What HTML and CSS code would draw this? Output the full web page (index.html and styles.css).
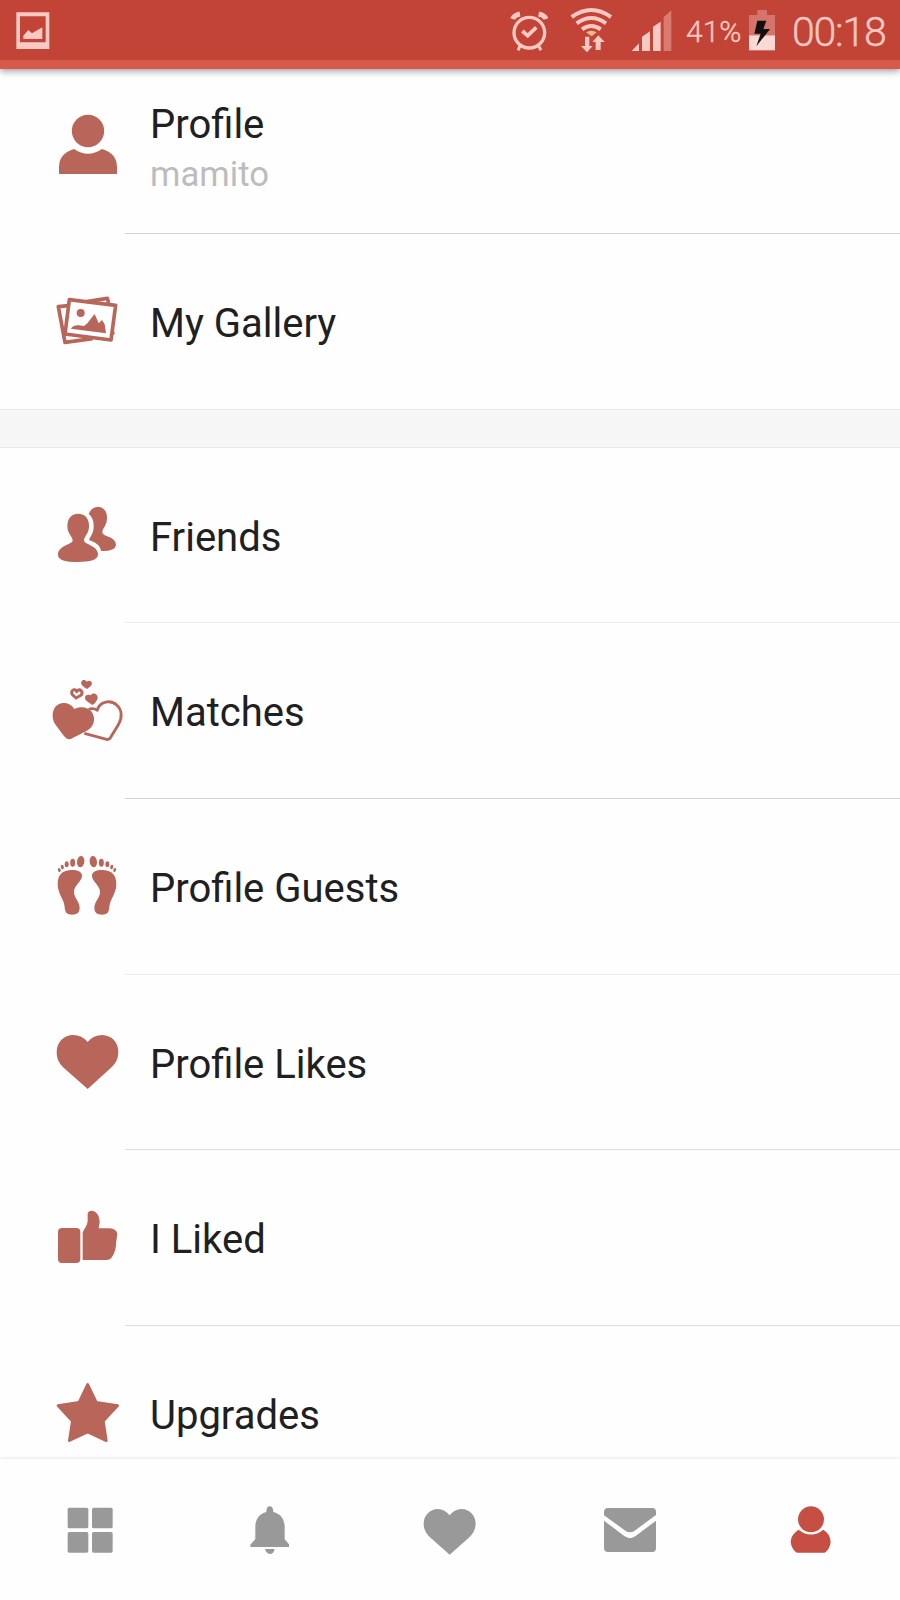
FILE: index.html
```
<!DOCTYPE html>
<html lang="en">
<head>
<meta charset="utf-8">
<title>Profile</title>
<link rel="stylesheet" href="styles.css">
</head>
<body>
<div class="screen">
  <header class="status">
    <svg class="shot" width="34" height="60" viewBox="47 0 102 180"><path fill-rule="evenodd" d="M48 37H147V147H48ZM59 49V127H136V49Z"/><path d="M69 117V107L84 90L95 100L126 82V117Z"/></svg>
    <svg class="alarm" width="40" height="60" viewBox="60 0 120 180"><g fill="none" stroke="#fbc9c3"><circle cx="118" cy="98" r="46" stroke-width="10"/><path d="M97 93L113 107L139 82" stroke-width="11"/><path d="M68 57Q72 46 90 42M146 42Q164 46 168 57" stroke-width="15"/><path d="M90 138L84 151M146 138L153 151" stroke-width="9"/></g></svg>
    <svg class="wifi" width="42" height="60" viewBox="240 0 126 180"><g fill="none" stroke="#fbc9c3" stroke-width="12"><path d="M245 51Q304 9 363 51M260 70Q304 38 348 70M276 88Q304 68 332 88"/></g><path fill="#f9b98c" d="M288 97Q304 87 320 97L305 109Z"/><path d="M285 110H298V138H308L291 157L273 138H285ZM325 106L344 126H332V150H317V126H307Z"/></svg>
    <svg class="signal" width="41" height="60" viewBox="423 0 123 180"><path d="M425 153L447 130V153ZM456 153V110L480 94V153ZM489 153V80L512 65V153Z"/><path fill="#d97b71" d="M521 153V52L544 31V153Z"/></svg>
    <span class="percent">41%</span>
    <svg class="battery" width="26" height="60" viewBox="777 0 78 180"><path fill="#d6736a" d="M802 30H831V45H855V106H777V45H802Z"/><path fill="#fbd9d5" d="M777 106H855V151H777Z"/><path fill="#111" d="M802 62H829L820 87H840L799 139L812 101H793Z"/></svg>
    <span class="clock">00:18</span>
  </header>

  <main class="list">
    <a class="row profile">
      <svg class="icon" viewBox="144 315 240 240"><circle cx="264" cy="393" r="48.500"/><path d="M177 522V500Q178 460 222 447Q264 476 306 447Q350 460 351 500V522Z"/></svg>
      <span class="text"><span class="label">Profile</span><span class="sub">mamito</span></span>
    </a>
    <a class="row">
      <svg class="icon" viewBox="24 3 240 240"><g fill="none" stroke="#b9665a" stroke-width="11" stroke-linejoin="round"><path d="M88 59L227 76L213 180L75 162Z"/><path d="M85 77L55 80L75 187L158 176M140 65L202 55L206 69"/></g><path d="M218 146L225 160L217 168Z"/><circle cx="122" cy="99" r="12"/><path d="M92 146Q101 134 117 136L132 138Q144 130 150 119L164 102L176 130L186 120L194 133L198 160Z"/></svg>
      <span class="label">My Gallery</span>
    </a>
    <div class="gap"></div>
    <a class="row light">
      <svg class="icon" viewBox="24 15 240 240"><path d="M114 71C136 71 148 87 147 109C147 130 134 139 132 150C130 164 174 165 174 193C174 210 151 216 114 216C77 216 54 211 54 194C54 166 99 164 98 151C97 140 82 130 82 108C82 86 94 71 114 71Z"/><path d="M146 71Q155 51 173 50C192 51 202 65 201 86C200 107 187 115 187 126C187 141 228 138 228 165Q226 184 183 183C181 166 166 157 148 151C145 144 162 134 161 107Q161 84 146 71Z"/></svg>
      <span class="label">Friends</span>
    </a>
    <a class="row">
      <svg class="icon" viewBox="24 15 240 240"><path d="M87 223Q80 223 70 211L49 182C38 170 35 150 41 135C50 110 87 106 103 132C122 122 144 126 155 140C168 160 162 180 149 191C138 200 118 208 102 217Q94 223 87 223Z"/><path fill="none" stroke="#b9665a" stroke-width="8.500" stroke-linejoin="round" d="M146 133Q160 128 172 136C178 107 213 104 230 120C246 134 248 157 235 179L212 217Q208 225 200 223L133 205"/><path d="M141 72Q132 68 125 59C119 47 134 40 140 50C151 42 161 54 153 62ZM157 120L141 109C128 99 138 85 152 91C158 80 174 86 173 99Q170 113 157 120Z"/><path fill="none" stroke="#b9665a" stroke-width="9" d="M108 99L97 89C91 77 103 68 110 79C120 69 130 80 124 90Z"/></svg>
      <span class="label">Matches</span>
    </a>
    <a class="row light">
      <svg class="icon" viewBox="24 18 240 240"><g id="foot"><path d="M92 90C114 88 127 96 126 109C125 125 101 137 102 157C103 176 119 184 119 205C118 219 111 224 96 224C79 224 75 216 74 202C73 179 54 164 53 133C53 105 66 92 92 90Z"/><ellipse cx="122" cy="65" rx="11" ry="17" transform="rotate(8 122 65)"/><ellipse cx="98" cy="68" rx="7.500" ry="12"/><ellipse cx="80" cy="73" rx="6" ry="9"/><ellipse cx="67" cy="81" rx="4.500" ry="7" transform="rotate(-15 67 81)"/><ellipse cx="58" cy="90" rx="4" ry="6" transform="rotate(-20 58 90)"/></g><use href="#foot" transform="translate(282 0) scale(-1 1)"/></svg>
      <span class="label">Profile Guests</span>
    </a>
    <a class="row mid short">
      <svg class="icon" viewBox="24 21 240 240"><path d="M143 222L71 158C55 143 50 128 50 110C51 80 73 60 99 60Q126 60 143 81Q160 60 187 60C214 61 235 81 235 110C235 129 228 145 213 158Z"/></svg>
      <span class="label">Profile Likes</span>
    </a>
    <a class="row mid">
      <svg class="icon" viewBox="24 6 240 240"><rect x="54" y="99" width="67" height="105" rx="12"/><path d="M128 195V114C132 101 143 92 143 76V54Q147 46 156 47C171 49 179 64 179 82L176 100H209Q230 102 232 117L229 138Q228 170 216 186Q211 195 199 195Z"/></svg>
      <span class="label">I Liked</span>
    </a>
    <a class="row last">
      <svg class="icon" viewBox="24 9 240 240"><path stroke="#b9665a" stroke-width="8" stroke-linejoin="round" d="M143 43L169 97L233 107L190 153L199 212L143 186L88 212L97 153L54 107L117 97Z"/></svg>
      <span class="label">Upgrades</span>
    </a>
  </main>

  <nav class="tabs">
    <svg class="tab" viewBox="30 120 240 240"><rect x="83" y="173" width="62" height="62" rx="5"/><rect x="156" y="173" width="62" height="62" rx="5"/><rect x="83" y="246" width="62" height="62" rx="5"/><rect x="156" y="246" width="62" height="62" rx="5"/></svg>
    <svg class="tab" viewBox="570 120 240 240"><path d="M679 186Q679 169 689 169Q700 169 700 186C722 191 734 209 734 230V268L747 283V291H631V284L646 268V230C646 209 658 191 679 186ZM675 297H704Q701 312 690 312Q678 311 675 297Z"/></svg>
    <svg class="tab" viewBox="1110 120 240 240"><path d="M1229 314L1170 262C1156 248 1151 236 1151 220C1152 195 1170 178 1193 177Q1215 178 1229 196Q1242 178 1265 177C1289 178 1306 195 1307 220C1307 236 1301 249 1289 261Z"/></svg>
    <svg class="tab" viewBox="390 120 240 240"><path d="M432 196V186Q432 174 444 174H577Q588 174 588 186V195L524 242Q510 252 496 242ZM432 212L493 258Q510 271 527 258L588 212V294Q588 306 577 306H444Q432 306 432 294Z"/></svg>
    <svg class="tab active" viewBox="930 120 240 240"><circle cx="1053" cy="208" r="39"/><path d="M1016 239Q1053 268 1090 239Q1110 251 1112 275Q1110 298 1094 308H1011Q994 298 992 275Q993 253 1016 239Z"/></svg>
  </nav>
</div>
</body>
</html>
```
FILE: styles.css
```
* { box-sizing: border-box; }

body {
  margin: 0;
  background: #fefefe;
  color: #202020;
  font-family: Roboto, "Liberation Sans", sans-serif;
}

.screen {
  display: flex;
  flex-direction: column;
  width: 900px;
  height: 1600px;
  overflow: hidden;
}

.status {
  display: flex;
  flex: none;
  height: 69px;
  padding-left: 15.67px;
  background: #c14436;
  border-bottom: 9px solid #d65a4a;
  box-shadow: 0 2px 7px rgba(0, 0, 0, 0.4);
  color: #fbc9c3;
  fill: #fbc9c3;
  font-weight: 300;
  -webkit-text-stroke: 0.4px #fbc9c3;
  white-space: nowrap;
  z-index: 1;
}

.status svg { flex: none; }
.alarm { margin-left: 460.33px; }
.wifi { margin-left: 20px; }
.signal { margin-left: 19px; }

.percent {
  width: 63px;
  margin-left: 14px;
  font-size: 30px;
  line-height: 63px;
}

.clock {
  margin-left: 17px;
  font-size: 41px;
  letter-spacing: -1.2px;
  line-height: 65px;
}

.list {
  flex: 1;
  min-height: 0;
  overflow: hidden;
}

.row {
  display: flex;
  align-items: flex-start;
  height: 176px;
  padding: 47px 0 0 48px;
  background: linear-gradient(#d4d4d4, #d4d4d4) 125px 100% / 100% 1px no-repeat;
}

.row.light { background-image: linear-gradient(#ececec, #ececec); }
.row.mid { background-image: linear-gradient(#dedede, #dedede); }
.row.short { height: 175px; }
.row.last { background: none; }
.row.profile { height: 165px; padding-top: 36px; }
.row.profile + .row { height: 175px; background: none; }
.gap + .row { height: 175px; }

.icon {
  flex: none;
  width: 80px;
  height: 80px;
  margin-right: 22px;
  fill: #b9665a;
}

.text { display: flex; flex-direction: column; }

.label {
  padding-top: 19px;
  font-size: 40px;
  line-height: 47px;
}

.profile .label { padding-top: 0; margin-top: -4px; }

.sub {
  margin-top: 6px;
  color: #bcbcbc;
  font-size: 34.7px;
  line-height: 41px;
}

.gap {
  height: 39px;
  background: #f6f6f6;
  border: solid #e8e8e8;
  border-width: 1px 0;
}

.tabs {
  display: flex;
  flex: none;
  justify-content: space-around;
  height: 141px;
  padding-top: 31px;
  background: #fefefe;
  box-shadow: 0 0 5px rgba(0, 0, 0, 0.13);
  z-index: 1;
}

.tab { width: 80px; height: 80px; fill: #999; }
.tab.active { fill: #c44f42; }
```
